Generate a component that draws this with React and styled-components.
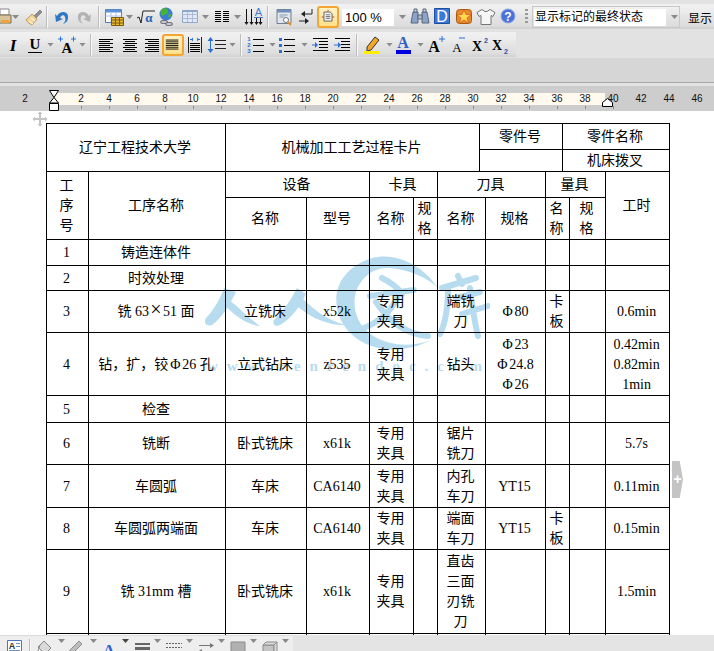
import React from 'react';
import styled, { createGlobalStyle } from 'styled-components';

const GlobalStyle = createGlobalStyle`
  html, body { margin: 0; padding: 0; background: #d6d6d6; }
  #root { height: 651px; }
`;

const Page = styled.div`
  display: flex;
  flex-direction: column;
  width: 714px;
  height: 651px;
  overflow: hidden;
  font-family: "Liberation Sans", "Noto Sans CJK SC", sans-serif;
`;

const TopStrip = styled.div`
  display: flex;
  height: ${({ $h }) => $h}px;
  padding-top: ${({ $top }) => $top}px;
  box-sizing: border-box;
  background: #e2e2e2;
  flex-shrink: 0;
`;

const Toolbar = styled.div`
  display: flex;
  align-items: center;
  width: ${({ $w }) => $w}px;
  height: ${({ $h }) => $h}px;
  padding-top: ${({ $pad }) => $pad || 0}px;
  box-sizing: border-box;
  background: linear-gradient(#f1f1f1, #ececec 30%, #e3e3e3 55%, #dedede 85%, #d0d0d0);
  flex-shrink: 0;
`;

const BottomBar = styled.div`
  display: flex;
  height: 16px;
  background: #e4e4e4;
  flex-shrink: 0;
  overflow: hidden;
`;

const BottomTools = styled.div`
  display: flex;
  align-items: flex-start;
  width: 293px;
  height: 16px;
  padding-top: 3px;
  box-sizing: border-box;
  background: #eeeeee;
  border-top: 1px solid #dcdcdc;
`;

const Slot = styled.div`
  display: flex;
  align-items: center;
  justify-content: center;
  width: ${({ $w }) => $w}px;
  height: ${({ $w }) => $w}px;
  margin-left: ${({ $ml }) => $ml}px;
  flex-shrink: 0;
  box-sizing: border-box;
  ${({ $active }) => $active && `
    border: 2px solid #f5a531;
    border-radius: 3px;
    background: linear-gradient(#fff3c4, #ffe08c);
  `}
`;

const Arrow = styled.div`
  width: 7px;
  height: 4px;
  margin-left: ${({ $ml }) => $ml}px;
  margin-top: ${({ $low }) => ($low ? 7 : 0)}px;
  flex-shrink: 0;
  background: ${({ $dark }) => ($dark ? '#444' : '#8a8a8a')};
  clip-path: polygon(0 0, 100% 0, 50% 100%);
`;

const Separator = styled.div`
  width: 1px;
  height: 22px;
  margin-left: ${({ $ml }) => $ml}px;
  background: #bdbdbd;
  border-right: 1px solid #f8f8f8;
  flex-shrink: 0;
`;

const Grip = styled.div`
  width: 3px;
  height: 16px;
  margin-left: ${({ $ml }) => $ml}px;
  background: repeating-linear-gradient(#9a9a9a 0 2px, transparent 2px 4px);
  flex-shrink: 0;
`;

const ZoomBox = styled.div`
  width: 52px;
  height: 17px;
  margin-left: ${({ $ml }) => $ml}px;
  padding-left: 3px;
  box-sizing: border-box;
  background: #fff;
  color: #000;
  font-size: 13px;
  line-height: 17px;
  flex-shrink: 0;
`;

const Combo = styled.div`
  display: flex;
  align-items: center;
  width: 148px;
  height: 22px;
  margin-left: ${({ $ml }) => $ml}px;
  padding-left: 1px;
  box-sizing: border-box;
  border: 1px solid #c9c9c9;
  flex-shrink: 0;
`;

const ComboText = styled.div`
  width: 132px;
  height: 17px;
  margin-right: 5px;
  padding-left: 1px;
  box-sizing: border-box;
  background: #fff;
  color: #000;
  font-size: 12px;
  line-height: 17px;
`;

const ToolLabel = styled.div`
  width: 26px;
  margin-left: ${({ $ml }) => $ml}px;
  color: #000;
  font-size: 12px;
  white-space: nowrap;
  flex-shrink: 0;
`;

const Band = styled.div`
  height: 25px;
  background: #d6d6d6;
  border-bottom: 1px solid #a9a9a9;
  box-sizing: border-box;
  flex-shrink: 0;
`;

const RulerGap = styled.div`
  height: 3px;
  background: #e2e2e2;
  flex-shrink: 0;
`;

const Ruler = styled.div`
  position: relative;
  display: flex;
  height: 25px;
  padding-left: 11px;
  box-sizing: border-box;
  background: linear-gradient(#fff9ee, #fff9ee) 53px 7px / 552px 12px no-repeat, #cdcdcd;
  flex-shrink: 0;
`;

const RulerCell = styled.div`
  position: relative;
  width: 28px;
  height: 25px;
  padding-top: 7px;
  box-sizing: border-box;
  color: #111;
  font-size: 10px;
  line-height: 12px;
  text-align: center;
  flex-shrink: 0;
  ${({ $tick }) => $tick && `
    &::after {
      content: '';
      position: absolute;
      left: 14px;
      top: 20px;
      width: 1px;
      height: 3px;
      background: #8a8a8a;
    }
  `}
`;

const IndentMark = styled.svg`
  position: absolute;
  left: ${({ $x }) => $x}px;
  top: ${({ $y }) => $y}px;
`;

const Doc = styled.div`
  position: relative;
  flex: 1;
  min-height: 0;
  padding: 12px 0 0 46px;
  background: #fff;
  overflow: hidden;
`;

const Watermark = styled.svg`
  position: absolute;
  left: 200px;
  top: 133px;
`;

const MoveHandle = styled.svg`
  position: absolute;
  left: 32px;
  top: 0;
`;

const SideTab = styled.div`
  position: absolute;
  left: 672px;
  top: 350px;
  width: 11px;
  height: 37px;
  background: #c4c4c4;
  clip-path: polygon(0 0, 70% 0, 100% 50%, 70% 100%, 0 100%);
  color: #fff;
  font-size: 14px;
  font-weight: bold;
  line-height: 36px;
  text-align: center;
`;

const Table = styled.table`
  position: relative;
  width: 624px;
  border-collapse: collapse;
  table-layout: fixed;
  font-family: "Liberation Serif", "Noto Sans CJK SC", serif;
  font-size: 14px;
  line-height: 20px;
  color: #000;
`;

const Row = styled.tr`
  height: ${({ $h }) => $h}px;
`;

const Cell = styled.td`
  padding: 1px 2px 0 0;
  border: 1px solid #000;
  text-align: center;
  vertical-align: middle;
  white-space: pre;
`;

const TightCell = styled(Cell)`
  line-height: 18px;
`;

const WideChar = styled.span`
  display: inline-block;
  width: 14px;
  font-size: ${({ $big }) => ($big ? 20 : 14)}px;
  line-height: 14px;
  text-align: center;
`;

const COLUMNS = [42, 137, 81, 63, 44, 24, 42, 6, 60, 17, 7, 36, 64];

const ROWS = [
  { h: 26, cells: ['1', '铸造连体件', '', '', '', '', '', '', '', '', ''] },
  { h: 25, cells: ['2', '时效处理', '', '', '', '', '', '', '', '', ''] },
  { h: 42, cells: ['3', '铣 63×51 面', '立铣床', 'x52k', '专用\n夹具', '', '端铣\n刀', 'Φ80', '卡\n板', '', '0.6min'] },
  { h: 63, cells: ['4', '钻，扩，铰Φ26 孔', '立式钻床', 'z535', '专用\n夹具', '', '钻头', 'Φ23\nΦ24.8\nΦ26', '', '', '0.42min\n0.82min\n1min'] },
  { h: 27, cells: ['5', '检查', '', '', '', '', '', '', '', '', ''] },
  { h: 42, cells: ['6', '铣断', '卧式铣床', 'x61k', '专用\n夹具', '', '锯片\n铣刀', '', '', '', '5.7s'] },
  { h: 43, cells: ['7', '车圆弧', '车床', 'CA6140', '专用\n夹具', '', '内孔\n车刀', 'YT15', '', '', '0.11min'] },
  { h: 42, cells: ['8', '车圆弧两端面', '车床', 'CA6140', '专用\n夹具', '', '端面\n车刀', 'YT15', '卡\n板', '', '0.15min'] },
  { h: 84, cells: ['9', '铣 31mm 槽', '卧式铣床', 'x61k', '专用\n夹具', '', '直齿\n三面\n刃铣\n刀', '', '', '', '1.5min'] },
  { h: 30, cells: ['', '', '', '', '', '', '', '', '', '', ''] },
];

// columns 7 and 9 of the body are split by the header's part-number cells
const BODY_SPANS = { 6: 2, 8: 2 };

// × and Φ take a full character width in the document
const withWideChars = (text) => text.split(/([×Φ])/).map((part, i) => (
  part === '×' || part === 'Φ' ? <WideChar key={i} $big={part === '×'}>{part}</WideChar> : part
));

const bars = (rows, color = '#000') => (
  <path d={rows.map(([a, b, y]) => `M${a} ${y}.5H${b}`).join('')} stroke={color} fill="none" />
);

const Label = ({ x, y, size, color = '#000', weight = 'bold', italic, font = 'Liberation Serif', children }) => (
  <text x={x} y={y} fontSize={size} fill={color} fontWeight={weight} fontStyle={italic ? 'italic' : 'normal'} fontFamily={font} textAnchor="middle">
    {children}
  </text>
);

const GLYPHS = {
  preview: <>
    <path d="M4 2h9v6H4z" fill="#fff" stroke="#8a8a8a" />
    <path d="M1 8h14v8H1z" fill="#d8c49a" stroke="#7a6a4a" />
    <path d="M5 13h8v3H5z" fill="#f1a23a" />
  </>,
  brush: <>
    <path d="M11 9l6-6 2 2-6 6z" fill="#8e8e8e" stroke="#666" strokeWidth=".6" />
    <path d="M3 13l6-6 5 5-5 6c-2-1-5-3-6-5z" fill="#f2d49c" stroke="#c49a58" />
    <path d="M6 14l4 3M8 11l4 3" stroke="#fff" />
  </>,
  undo: <path d="M5 9C8 3 17 4 16 11c0 3-2 5-5 6 2-2 3-4 2-7-1-3-4-2-5 1l3 1-7 3-1-8z" fill="#2f78c4" />,
  redo: <path d="M15 9C12 3 3 4 4 11c0 3 2 5 5 6-2-2-3-4-2-7 1-3 4-2 5 1l-3 1 7 3 1-8z" fill="#b3b3b3" />,
  tableInsert: <>
    <path d="M1.500 2.500h16v13h-16z" fill="#fff" stroke="#4c7fc0" />
    <path d="M1.500 2.500h16v3h-16z" fill="#5d92d4" />
    <path d="M1.500 9h16M7 6v9M12 6v9" stroke="#a9c4e6" />
    <path d="M7.500 10.500h12v8h-12z" fill="#e8b92c" stroke="#7a5b10" />
    <path d="M7.500 13h12M7.500 16h12M11.500 10v8M15.500 10v8" stroke="#7a5b10" />
  </>,
  formula: <>
    <path d="M1 11l2-1 2 6 2-12h12" stroke="#222" fill="none" />
    <Label x={13} y={15} size={13} color="#1f66b8">α</Label>
  </>,
  globe: <>
    <circle cx="10" cy="7" r="6.500" fill="#3b7ed0" />
    <path d="M7 1.500c3-1 5 0 5 3s-2 2-3 3-3 2-4 0 0-5 2-6zM13 7c2 0 3 1 2 2l-2 2c-1-1-1-2 0-4z" fill="#45b52f" />
    <path d="M6 15h4M11 17h4" stroke="#556" strokeWidth="3.500" strokeLinecap="round" />
    <path d="M6 15h4M11 17h4" stroke="#e8ecf2" strokeWidth="1.500" strokeLinecap="round" />
  </>,
  tableGrid: <>
    <path d="M2.500 3.500h15v12h-15z" fill="#dfe8f4" stroke="#8fa7c6" />
    <path d="M2.500 7.500h15M2.500 11.500h15M7.500 4v11M12.500 4v11" stroke="#a9bdd6" />
    <path d="M2.500 3.500h15v1.500h-15z" fill="#8fa7c6" />
  </>,
  columns: bars([[3, 9, 4], [11, 17, 4], [3, 9, 6], [11, 17, 6], [3, 9, 8], [11, 17, 8], [3, 9, 10], [11, 17, 10], [3, 9, 12], [11, 17, 12], [3, 9, 14], [11, 17, 14]]),
  stackChart: <>
    <path d="M3.500 2v14M8.500 2v14" stroke="#111" />
    <path d="M13.500 11v5M17.500 11v5" stroke="#111" />
    <path d="M1.500 15l2 3 2-3zM6.500 15l2 3 2-3zM11.500 15l2 3 2-3zM15.500 15l2 3 2-3z" fill="#111" />
    <Label x={15.500} y={9} size={11} color="#4a7ad0" weight="normal" font="Liberation Sans">A</Label>
    <path d="M11 10.500h9" stroke="#4a7ad0" />
  </>,
  docPreview: <>
    <path d="M3 2.500h14v14H3z" fill="#dfe6ee" stroke="#6f7f92" />
    <path d="M3 2.500h14v3H3z" fill="#6f8fb8" />
    <path d="M5.500 8h8M5.500 10h5" stroke="#8d9aaa" />
    <circle cx="12" cy="13" r="2.500" fill="#fff" stroke="#777" />
    <path d="M14 15l3 3" stroke="#e88f1f" strokeWidth="2" />
  </>,
  swapMarks: <>
    <path d="M17 2v5h-8" stroke="#222" fill="none" />
    <path d="M10 4v6l-4-3zM10 11v6l4-3z" fill="#222" />
    <path d="M4 14h6" stroke="#222" />
  </>,
  trackBox: <>
    <path d="M5.500 4.500h7l2 2v8h-9z" fill="#f4f4f4" stroke="#555" />
    <path d="M7.500 7.500h5M7.500 9.500h5M7.500 11.500h5" stroke="#666" />
    <path d="M3 10h2M15 10h2M10 2v2" stroke="#b23a2a" />
  </>,
  binoculars: <>
    <path d="M3 5h5v11H1zM12 5h5l2 11h-7z" fill="#8ba3c9" stroke="#59667c" />
    <path d="M8 8h4v4H8z" fill="#b6bfcc" stroke="#59667c" />
    <path d="M4 2h3v3H4zM13 2h3v3h-3z" fill="#cfd6e0" stroke="#59667c" />
  </>,
  docer: <>
    <path d="M2.500 1.500h15v15h-15z" fill="#3c78d8" stroke="#1e4f9e" />
    <Label x={10} y={15} size={16} color="#fff" weight="normal" font="Liberation Sans">D</Label>
  </>,
  starBox: <>
    <rect x="2.500" y="2.500" width="15" height="14" rx="3" fill="#e8892b" stroke="#a85a12" />
    <path d="M10 3l2 4.500 5 .5-4 3 1.500 5-4.500-3-4.500 3L7 11 3 8l5-.5z" fill="#ffd94a" stroke="#d6472b" strokeWidth=".6" />
  </>,
  shirt: <path d="M6 2.500l3 2h2l3-2 5 3-2 4-2-1v9H5v-9l-2 1-2-4z" fill="#f6f6f6" stroke="#777" />,
  help: <>
    <circle cx="10" cy="9" r="7" fill="#4a72d8" stroke="#8ba6e8" />
    <Label x={10} y={13.500} size={12} color="#fff" font="Liberation Sans">?</Label>
  </>,
  italic: <Label x={10} y={16} size={17} italic>I</Label>,
  underline: <>
    <Label x={10} y={14} size={15}>U</Label>
    <path d="M3 17.500h14" stroke="#000" />
  </>,
  fontGrow: <>
    <Label x={10} y={18} size={15}>A</Label>
    <path d="M1 4h5M3.500 1.500v5M14 4h5M16.500 1.500v5" stroke="#2a6fd6" />
  </>,
  alignLeft: bars([[3, 17, 4], [3, 14, 6], [3, 17, 8], [3, 14, 10], [3, 17, 12], [3, 14, 14], [3, 17, 16]]),
  alignCenter: bars([[3, 17, 4], [5, 15, 6], [3, 17, 8], [5, 15, 10], [3, 17, 12], [5, 15, 14], [3, 17, 16]]),
  alignRight: bars([[3, 17, 4], [6, 17, 6], [3, 17, 8], [6, 17, 10], [3, 17, 12], [6, 17, 14], [3, 17, 16]]),
  justify: bars([[2, 16, 4], [2, 16, 6], [2, 16, 8], [2, 16, 10], [2, 16, 12], [2, 16, 14]]),
  distribute: <>
    <path d="M3.500 2v16M16.500 2v16" stroke="#222" />
    {bars([[5, 15, 8], [5, 15, 10], [5, 15, 12], [5, 15, 14], [5, 15, 16]])}
    <path d="M5 4.500h2M13 4.500h2" stroke="#2a6fd6" />
    <path d="M8 2.500v4l-2-2zM12 2.500v4l2-2z" fill="#2a6fd6" />
  </>,
  lineSpacing: <>
    <path d="M4.500 5v10" stroke="#2a6fd6" />
    <path d="M1.500 6l3-4 3 4zM1.500 14l3 4 3-4z" fill="#2a6fd6" />
    {bars([[9, 20, 5], [9, 20, 9], [9, 20, 13]], '#222')}
  </>,
  numbered: <>
    <Label x={3} y={6} size={6} color="#2a6fd6" font="Liberation Sans">1</Label>
    <Label x={3} y={12} size={6} color="#2a6fd6" font="Liberation Sans">2</Label>
    <Label x={3} y={18} size={6} color="#2a6fd6" font="Liberation Sans">3</Label>
    {bars([[7, 18, 4], [7, 18, 10], [7, 18, 16]])}
  </>,
  bulleted: <>
    <path d="M2 3h3v3H2zM2 9h3v3H2zM2 15h3v3H2z" fill="#2a6fd6" />
    {bars([[7, 18, 4], [7, 18, 10], [7, 18, 16]])}
  </>,
  outdent: <>
    {bars([[3, 18, 3], [9, 18, 6], [9, 18, 9], [9, 18, 12], [3, 18, 15]])}
    <path d="M2 10h3" stroke="#2a6fd6" />
    <path d="M5 7v6l3-3z" fill="#2a6fd6" />
  </>,
  indent: <>
    {bars([[3, 18, 3], [9, 18, 6], [9, 18, 9], [9, 18, 12], [3, 18, 15]])}
    <path d="M2 10h4" stroke="#2a6fd6" />
    <path d="M6 7v6l3-3z" fill="#2a6fd6" />
  </>,
  highlight: <>
    <path d="M4 12l8-10 4 3-8 10-4 1z" fill="#f4a62a" stroke="#333" />
    <path d="M1 16h15v3H1z" fill="#ffee00" />
  </>,
  fontColor: <>
    <Label x={9} y={13} size={16} color="#2a5fc4">A</Label>
    <path d="M2 15h15v4H2z" fill="#0000e0" />
  </>,
  sizeUp: <>
    <Label x={8} y={17} size={16}>A</Label>
    <path d="M13 4h6M16 1v6" stroke="#2a6fd6" />
  </>,
  sizeDown: <>
    <Label x={9} y={17} size={13} weight="normal">A</Label>
    <path d="M11 3h6" stroke="#2a6fd6" />
  </>,
  superscript: <>
    <Label x={7} y={16} size={14}>X</Label>
    <Label x={16} y={8} size={7} color="#2a4fb4" font="Liberation Sans">2</Label>
  </>,
  subscript: <>
    <Label x={7} y={15} size={14}>X</Label>
    <Label x={16} y={19} size={7} color="#2a4fb4" font="Liberation Sans">2</Label>
  </>,
  stub: <path d="M0 4h2v12H0z" fill="#2f5fa8" />,
  textBox: <>
    <path d="M2.500 1.500h14v15h-14z" fill="#fff" stroke="#4a78b8" />
    <Label x={7} y={10} size={9} color="#333" font="Liberation Sans">A</Label>
    {bars([[11, 15, 4], [11, 15, 7], [4, 15, 11], [4, 15, 14]], '#6b8fc4')}
    <path d="M12 13h6v4h-6z" fill="#3c78d8" />
  </>,
  bucket: <>
    <path d="M9 2l7 7-6 6-7-7z" fill="#d9d9d9" stroke="#8a8a8a" />
    <path d="M5 6l-2 6" stroke="#8a8a8a" />
  </>,
  pen: <path d="M2 17l3-6 9-9 3 3-9 9z" fill="#bdbdbd" stroke="#8f8f8f" />,
  fontBlue: <Label x={10} y={17} size={17} color="#2a5fd6">A</Label>,
  lineStyle: bars([[2, 17, 4], [2, 17, 5], [2, 17, 8], [2, 17, 9], [2, 17, 10], [2, 17, 13]], '#666'),
  dashStyle: <path d="M2 4.500h16M2 8.500h16M2 12.500h16" stroke="#666" strokeDasharray="2 1" fill="none" />,
  arrowStyle: <>
    <path d="M3 6.500h13M4 12.500h13" stroke="#777" />
    <path d="M14 4l4 2.500-4 2.500zM6 10l-4 2.500 4 2.500z" fill="#777" />
  </>,
  shadow: <path d="M3 3h14v14H3z" fill="#b0b0b0" stroke="#8c8c8c" />,
  cube: <>
    <path d="M3 6h11v11H3z" fill="#c4c4c4" stroke="#8c8c8c" />
    <path d="M3 6l3-3h11l-3 3zM14 6l3-3v11l-3 3z" fill="#dadada" stroke="#8c8c8c" />
  </>,
};

const WIDTHS = { arrow: 7, sep: 2, grip: 3, zoom: 52, combo: 148, label: 26, active: 22 };

const TOP_TOOLS = [
  ['preview', 6], ['arrow', 15.5], ['brush', 33], ['sep', 47], ['undo', 62], ['redo', 84], ['sep', 99],
  ['tableInsert', 114], ['arrow', 129.5], ['formula', 146], ['globe', 166], ['tableGrid', 190], ['arrow', 205.5],
  ['columns', 222], ['arrow', 237.5], ['stackChart', 253], ['sep', 268], ['docPreview', 284], ['swapMarks', 305],
  ['active:trackBox', 327.5], ['zoom', 368], ['arrow', 402.5], ['binoculars', 420], ['docer', 442], ['starBox', 464],
  ['shirt', 486], ['help', 508], ['grip', 526], ['combo', 606], ['label', 701],
];

const FORMAT_TOOLS = [
  ['italic', 13], ['underline', 35], ['arrow', 50.5], ['fontGrow', 67], ['arrow', 82.5], ['sep', 91],
  ['alignLeft', 106], ['alignCenter', 130], ['alignRight', 152], ['active:justify', 173], ['distribute', 195],
  ['lineSpacing', 216], ['arrow', 232.5], ['sep', 241], ['numbered', 256], ['arrow', 272.5], ['bulleted', 287],
  ['arrow', 304.5], ['outdent', 320], ['indent', 342], ['sep', 357], ['highlight', 373], ['arrow', 389.5],
  ['fontColor', 404], ['arrow', 420.5], ['sizeUp', 436], ['sizeDown', 458], ['superscript', 480], ['subscript', 500],
];

const DRAW_TOOLS = [
  ['stub', -8], ['textBox', 15], ['sep', 30], ['bucket', 45], ['arrow', 61.5], ['pen', 75], ['arrow', 93.5],
  ['fontBlue', 109], ['arrow:dark', 125.5], ['lineStyle', 143], ['arrow', 157.5], ['dashStyle', 174], ['arrow', 189.5],
  ['arrowStyle', 206], ['arrow', 221.5], ['shadow', 238], ['arrow', 253.5], ['cube', 270], ['arrow', 285.5],
];

// the tools sit at uneven distances, so each gets the margin that brings it to its centre
const spaceOut = (tools) => {
  let right = 0;
  return tools.map(([name, center]) => {
    const [kind, detail] = name.split(':');
    const width = WIDTHS[kind] ?? 20;
    const ml = center - width / 2 - right;
    right = center + width / 2;
    return { kind, detail, ml };
  });
};

const Glyph = ({ name }) => (
  <svg width="20" height="20" viewBox="0 0 20 20">{GLYPHS[name]}</svg>
);

const ToolRow = ({ tools, low }) => spaceOut(tools).map(({ kind, detail, ml }, i) => {
  if (kind === 'arrow') return <Arrow key={i} $ml={ml} $dark={detail === 'dark'} $low={low} />;
  if (kind === 'sep') return <Separator key={i} $ml={ml} />;
  if (kind === 'grip') return <Grip key={i} $ml={ml} />;
  if (kind === 'zoom') return <ZoomBox key={i} $ml={ml}>100 %</ZoomBox>;
  if (kind === 'label') return <ToolLabel key={i} $ml={ml}>显示</ToolLabel>;
  if (kind === 'combo') {
    return (
      <Combo key={i} $ml={ml}>
        <ComboText>显示标记的最终状态</ComboText>
        <Arrow $ml={0} />
      </Combo>
    );
  }
  if (kind === 'active') return <Slot key={i} $w={22} $ml={ml} $active><Glyph name={detail} /></Slot>;
  return <Slot key={i} $w={20} $ml={ml}><Glyph name={kind} /></Slot>;
});

const RULER_NUMBERS = [2, '', 2, 4, 6, 8, 10, 12, 14, 16, 18, 20, 22, 24, 26, 28, 30, 32, 34, 36, 38, 40, 42, 44, 46];

const App = () => (
  <Page>
    <GlobalStyle />
    <TopStrip $h={32} $top={4}>
      <Toolbar $w={714} $h={25} $pad={1}><ToolRow tools={TOP_TOOLS} /></Toolbar>
    </TopStrip>
    <TopStrip $h={26} $top={0}>
      <Toolbar $w={516} $h={25}><ToolRow tools={FORMAT_TOOLS} /></Toolbar>
    </TopStrip>
    <Band />
    <RulerGap />
    <Ruler>
      {RULER_NUMBERS.map((n, i) => (
        <RulerCell key={i} $tick={i >= 2 && i <= 21}>{n}</RulerCell>
      ))}
      <IndentMark $x={49} $y={4} width="10" height="21" viewBox="0 0 10 21">
        <path d="M.5.5h9L5 7.500zM5 7.500l4.500 5.500H.5z" fill="#fff" stroke="#000" />
        <path d="M.5 13.500h9v7h-9z" fill="#fff" stroke="#000" />
      </IndentMark>
      <IndentMark $x={602} $y={12} width="11" height="9" viewBox="0 0 11 9">
        <path d="M5.500.5l5 4v4H.5v-4z" fill="#fff" stroke="#000" />
      </IndentMark>
    </Ruler>
    <Doc>
      <Watermark width="290" height="140" viewBox="0 0 290 140">
        <g fill="#b8dcef">
          <path d="M24 44C20 56 12 68 6 74c-3 5 1 9 6 7C22 74 30 60 36 48z" />
          <path d="M26 54c10 6 20 18 34 28-12-1-26-10-36-22z" />
          <path d="M97 44c-7 14-15 24-23 32-2 5 2 7 6 5C92 74 100 62 106 50z" />
          <path d="M100 52c10 10 25 24 46 29-21 1-41-11-51-21z" />
          <path d="M238 44C222 20 195 8 172 14 140 24 130 50 140 74c10 24 45 44 92 22-32 12-67 0-75-24C148 48 165 22 190 24c20 2 38 10 48 20z" />
        </g>
        <path
          d="M182 34c8 4 16 10 20 16M170 52l44-6M198 52c-8 18-20 26-34 32M176 58c12 18 29 32 52 34M258 32l4 8M242 44l34-10M248 44c0 18-2 34-8 46M256 54l24-6M262 70l26-8M270 44c2 16 4 32 8 48"
          fill="none"
          stroke="#b8dcef"
          strokeWidth="6"
          strokeLinecap="round"
        />
        <text x="7" y="127" textLength="275" lengthAdjust="spacing" fontFamily="Liberation Serif" fontSize="15" fontWeight="bold" fill="#b8dcef">
          www.renrendoc.com
        </text>
      </Watermark>
      <Table>
        <colgroup>
          {COLUMNS.map((w, i) => <col key={i} width={w} />)}
        </colgroup>
        <tbody>
          <Row $h={26}>
            <Cell colSpan={2} rowSpan={2}>辽宁工程技术大学</Cell>
            <Cell colSpan={5} rowSpan={2}>机械加工工艺过程卡片</Cell>
            <Cell colSpan={3}>零件号</Cell>
            <Cell colSpan={3}>零件名称</Cell>
          </Row>
          <Row $h={22}>
            <TightCell colSpan={3} />
            <TightCell colSpan={3}>机床拨叉</TightCell>
          </Row>
          <Row $h={26}>
            <Cell rowSpan={2}>{'工\n序\n号'}</Cell>
            <Cell rowSpan={2}>工序名称</Cell>
            <Cell colSpan={2}>设备</Cell>
            <Cell colSpan={2}>卡具</Cell>
            <Cell colSpan={3}>刀具</Cell>
            <Cell colSpan={3}>量具</Cell>
            <Cell rowSpan={2}>工时</Cell>
          </Row>
          <Row $h={42}>
            <Cell>名称</Cell>
            <Cell>型号</Cell>
            <Cell>名称</Cell>
            <Cell>{'规\n格'}</Cell>
            <Cell colSpan={2}>名称</Cell>
            <Cell>规格</Cell>
            <Cell colSpan={2}>{'名\n称'}</Cell>
            <Cell>{'规\n格'}</Cell>
          </Row>
          {ROWS.map((row, r) => (
            <Row key={r} $h={row.h}>
              {row.cells.map((text, c) => (
                <Cell key={c} colSpan={BODY_SPANS[c] ?? 1}>{withWideChars(text)}</Cell>
              ))}
            </Row>
          ))}
        </tbody>
      </Table>
      <MoveHandle width="16" height="16" viewBox="0 0 16 16">
        <path d="M8 1v14M1 8h14" stroke="#c4c4c4" strokeWidth="2" />
        <path d="M5.500 3L8 .5 10.500 3zM5.500 13L8 15.500 10.500 13zM3 5.500L.5 8 3 10.500zM13 5.500L15.500 8 13 10.500z" fill="#c4c4c4" />
      </MoveHandle>
      <SideTab>+</SideTab>
    </Doc>
    <BottomBar>
      <BottomTools><ToolRow tools={DRAW_TOOLS} /></BottomTools>
    </BottomBar>
  </Page>
);

export default App;
